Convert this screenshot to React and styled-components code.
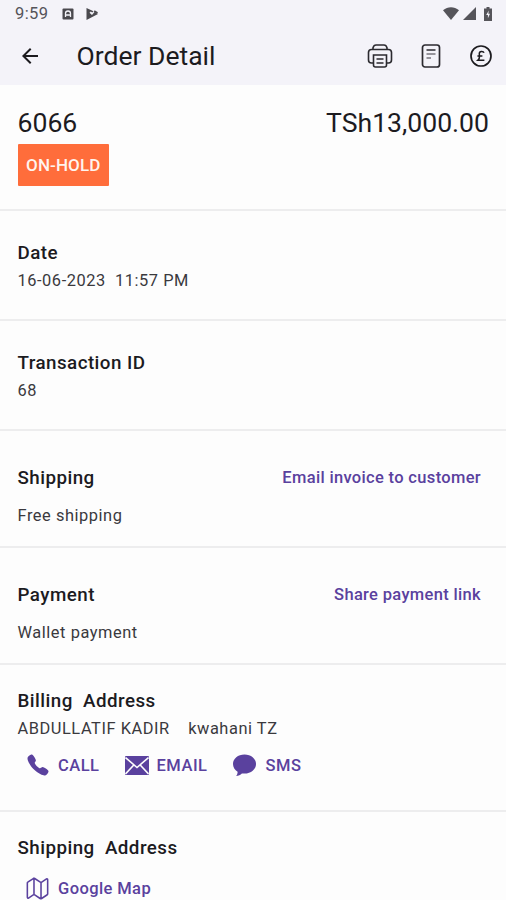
import React from 'react';
import styled, { createGlobalStyle } from 'styled-components';
import { IoCall, IoMapOutline } from 'react-icons/io5';
import { MdArrowBack } from 'react-icons/md';

const GlobalStyle = createGlobalStyle`
    * { box-sizing: border-box; }
    body {
        margin: 0;
        overflow: hidden;
        background: #fdfdfd;
        font-family: Roboto, "Liberation Sans", sans-serif;
        color: #1c1b1f;
    }
`

const Screen = styled.div`
    height: 900px;
    overflow: hidden;
    background: #fdfdfd;
`

const Header = styled.header`
    height: 85px;
    background: #f4f3f9;
`

const StatusBar = styled.div`
    display: flex;
    align-items: center;
    height: 27px;
    padding: 0 14px 0 15px;
    color: #55545a;
`

const Clock = styled.span`
    width: 47px;
    font-size: 16.5px;
    letter-spacing: 0.4px;
    white-space: nowrap;
`

const StatusIcons = styled.div`
    display: flex;
    align-items: center;
    gap: ${props => props.$gap};
    margin-left: ${props => props.$end ? 'auto' : '0'};
    svg { display: block; }
`

const AppBar = styled.div`
    display: flex;
    align-items: center;
    height: 57px;
    padding: 0 13px 0 18px;
`

const PageTitle = styled.h1`
    margin: 0 0 0 34.5px;
    font-size: 26.5px;
    font-weight: 400;
    line-height: 32px;
`

const Actions = styled.div`
    display: flex;
    align-items: center;
    gap: 28px;
    margin-left: auto;
    svg { display: block; }
`

const Section = styled.section`
    height: ${props => props.$height};
    padding: ${props => props.$top} 17px 0 17.5px;
    border-bottom: 2px solid #ededee;
`

const Row = styled.div`
    display: flex;
    justify-content: space-between;
    align-items: center;
`

const Big = styled.div`
    font-size: 26.6px;
    line-height: 32px;
`

const Badge = styled.div`
    display: flex;
    align-items: center;
    justify-content: center;
    width: 91.5px;
    height: 41.5px;
    margin-top: 5px;
    border-radius: 1px;
    background: #ff6d3b;
    color: #fff4ee;
    font-size: 17px;
    font-weight: 500;
    letter-spacing: 0.1px;
`

const Heading = styled.h2`
    margin: 0;
    font-size: 18.8px;
    font-weight: 500;
    line-height: 28px;
    letter-spacing: 0.45px;
    white-space: pre;
`

const Text = styled.div`
    margin-top: ${props => props.$gap || '0'};
    font-size: 16.4px;
    line-height: 28px;
    letter-spacing: 0.55px;
    white-space: pre;
    color: #3a393d;
`

const LinkButton = styled.a`
    padding-right: 8px;
    color: #5a419e;
    font-size: 16.5px;
    font-weight: 500;
    line-height: 28px;
    letter-spacing: 0.33px;
`

const Contacts = styled.div`
    display: flex;
    gap: 25px;
    padding: ${props => props.$top || '8px'} 0 0 ${props => props.$left || '8.5px'};
`

const Contact = styled.a`
    display: flex;
    align-items: center;
    gap: 8px;
    height: 28px;
    color: #5a419e;
    font-size: 16.5px;
    font-weight: 500;
    letter-spacing: ${props => props.$spacing || '0.5px'};
    svg { display: block; }
`

const NoticeIcon = () => (
    <svg width="12" height="12" viewBox="0 0 12 12">
        <rect x=".5" y=".5" width="11" height="11" rx="1" fill="#4a494e" />
        <path d="M3.5 9V5.5a2.5 2.5 0 0 1 5 0V9M3.5 7h5" fill="none" stroke="#f4f3f9" strokeWidth="1.3" />
    </svg>
)

const PlayIcon = () => (
    <svg width="14" height="14" viewBox="0 0 14 14">
        <path d="M1.5 1v12L13 7 9.5 5 7 8 4.5 5.7 5.8 4.4 7.2 5.6 8.5 4.3z" fill="#4a494e" />
        <path d="M9.2 4.1 12.5 6" stroke="#4a494e" strokeWidth="1.8" />
    </svg>
)

const WifiIcon = () => (
    <svg width="16" height="13" viewBox="0 0 16 13">
        <path d="M0 3.2C4.8-.7 11.2-.7 16 3.2L8 13z" fill="#55545a" />
    </svg>
)

const SignalIcon = () => (
    <svg width="13" height="13" viewBox="0 0 13 13">
        <path d="M13 0v13H0z" fill="#55545a" />
    </svg>
)

const BatteryIcon = () => (
    <svg width="8" height="14" viewBox="0 0 8 14">
        <path d="M2.5 0h3v1.5H8V14H0V1.5h2.5z" fill="#55545a" />
        <path d="M4.8 3.5 2.2 8h1.7v3.2L6 6.8H4.3z" fill="#f4f3f9" />
    </svg>
)

const PrinterIcon = () => (
    <svg width="26" height="26" viewBox="0 0 26 26" fill="none" stroke="#2b2a2f" strokeWidth="1.6">
        <path d="M6 6.5V4.8Q6.800 2 9 2h8Q19.200 2 20 4.800v1.700" />
        <path d="M6 20H4.500Q1.500 20 1.500 17V9.500q0-3 3-3h17q3 0 3 3V17q0 3-3 3H20" />
        <path d="M6.500 12h13v10q0 2-2 2h-9q-2 0-2-2z" />
        <path d="M9.500 16h7M9.500 20h7" strokeWidth="1.400" />
    </svg>
)

const ReceiptIcon = () => (
    <svg width="20" height="24" viewBox="0 0 20 24" fill="none" stroke="#2b2a2f">
        <rect x="1.500" y="1" width="17" height="22" rx="2.500" strokeWidth="1.700" />
        <path d="M5.500 6h9" strokeWidth="1.500" />
        <path d="M5.500 10h9M5.500 14h4.500" strokeWidth="1.500" stroke="#77767c" />
    </svg>
)

const PoundIcon = () => (
    <svg width="24" height="24" viewBox="0 0 24 24" fill="none" stroke="#1c1b1f">
        <circle cx="12" cy="12" r="10" strokeWidth="1.7" />
        <path d="M15 8.8c-.5-1.8-4.7-2.1-4.7.8 0 1.7 1 4.7-1.3 6.6h6.4M8.4 12.1h5" strokeWidth="1.5" />
    </svg>
)

const MailIcon = () => (
    <svg width="24" height="19" viewBox="0 0 24 19">
        <rect width="24" height="19" rx="1" fill="#5a419e" />
        <path d="m.5 1.5 11.5 10 11.5-10M.5 18l8.3-9M23.5 18l-8.3-9" fill="none" stroke="#fdfdfd" strokeWidth="1.6" />
    </svg>
)

const BubbleIcon = () => (
    <svg width="25" height="24" viewBox="0 0 25 24">
        <path d="M12.5 1.5C6 1.5 1 5.7 1 11c0 3.2 1.8 6 4.6 7.8.1 1.500-.4 2.900-1.400 4.200 2.300-.2 4.300-1.100 5.700-2.600 8 1.200 14.100-3.500 14.100-9.400 0-5.300-5-9.500-11.500-9.500z" fill="#5a419e" />
    </svg>
)

export default class App extends React.Component {
    render() {
        return (
            <Screen>
                <GlobalStyle />
                <Header>
                    <StatusBar>
                        <Clock>9:59</Clock>
                        <StatusIcons $gap="11px">
                            <NoticeIcon />
                            <PlayIcon />
                        </StatusIcons>
                        <StatusIcons $gap="4px" $end>
                            <WifiIcon />
                            <SignalIcon />
                            <span />
                            <BatteryIcon />
                        </StatusIcons>
                    </StatusBar>
                    <AppBar>
                        <MdArrowBack size={24} />
                        <PageTitle>Order Detail</PageTitle>
                        <Actions>
                            <PrinterIcon />
                            <ReceiptIcon />
                            <PoundIcon />
                        </Actions>
                    </AppBar>
                </Header>

                <Section $height="126px" $top="22px">
                    <Row>
                        <Big>6066</Big>
                        <Big>TSh13,000.00</Big>
                    </Row>
                    <Badge>ON-HOLD</Badge>
                </Section>

                <Section $height="110px" $top="28px">
                    <Heading>Date</Heading>
                    <Text>{'16-06-2023  11:57 PM'}</Text>
                </Section>

                <Section $height="110px" $top="28px">
                    <Heading>Transaction ID</Heading>
                    <Text>68</Text>
                </Section>

                <Section $height="117px" $top="33px">
                    <Row>
                        <Heading>Shipping</Heading>
                        <LinkButton>Email invoice to customer</LinkButton>
                    </Row>
                    <Text $gap="10px">Free shipping</Text>
                </Section>

                <Section $height="117px" $top="33px">
                    <Row>
                        <Heading>Payment</Heading>
                        <LinkButton>Share payment link</LinkButton>
                    </Row>
                    <Text $gap="10px">Wallet payment</Text>
                </Section>

                <Section $height="147px" $top="22px">
                    <Heading>{'Billing  Address'}</Heading>
                    <Text>{'ABDULLATIF KADIR    kwahani TZ'}</Text>
                    <Contacts>
                        <Contact><IoCall size={24} />CALL</Contact>
                        <Contact><MailIcon />EMAIL</Contact>
                        <Contact><BubbleIcon />SMS</Contact>
                    </Contacts>
                </Section>

                <Section $height="110px" $top="22px">
                    <Heading>{'Shipping  Address'}</Heading>
                    <Contacts $top="12px" $left="7.5px">
                        <Contact $spacing="0.4px"><IoMapOutline size={25} />Google Map</Contact>
                    </Contacts>
                </Section>
            </Screen>
        )
    }
}
